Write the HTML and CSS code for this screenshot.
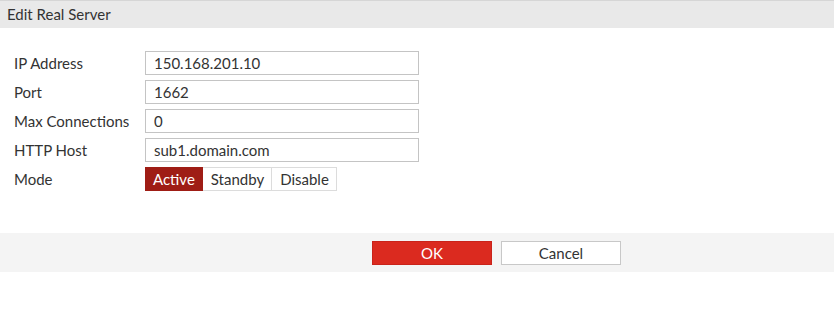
FILE: index.html
```html
<!DOCTYPE html>
<html>
<head>
<meta charset="utf-8">
<link rel="stylesheet" href="styles.css">
</head>
<body>
<div class="dialog">
  <div class="title">Edit Real Server</div>
  <form class="form">
    <label class="lbl">IP Address</label>
    <div class="field">150.168.201.10</div>
    <label class="lbl">Port</label>
    <div class="field">1662</div>
    <label class="lbl">Max Connections</label>
    <div class="field">0</div>
    <label class="lbl">HTTP Host</label>
    <div class="field">sub1.domain.com</div>
    <label class="lbl">Mode</label>
    <div class="modes">
      <span class="mode active">Active</span><span class="mode">Standby</span><span class="mode">Disable</span>
    </div>
  </form>
  <div class="footer">
    <button class="btn ok">OK</button>
    <button class="btn cancel">Cancel</button>
  </div>
</div>
</body>
</html>
```
FILE: styles.css
```css
* { box-sizing: border-box; }
html, body { margin: 0; padding: 0; background: #fff; }
body {
  font-family: Lato, "Open Sans", "Liberation Sans", sans-serif;
  font-size: 15px;
  color: #333;
  width: 834px;
  height: 336px;
}
.title {
  height: 28px;
  line-height: 27px;
  background: #e9e9e9;
  border-top: 1px solid #d6d6d6;
  padding-left: 7px;
  font-size: 15px;
  color: #333;
}
.form {
  display: grid;
  grid-template-columns: 131px 274px;
  grid-auto-rows: 24px;
  row-gap: 5px;
  padding: 23px 0 0 14px;
  height: 205px;
  align-content: start;
  align-items: center;
}
.lbl { line-height: 24px; }
.field {
  height: 24px;
  border: 1px solid #c4c4c4;
  padding-left: 8px;
  line-height: 22px;
  color: #333;
}
.modes { display: flex; height: 24px; align-self: start; }
.mode {
  height: 24px;
  line-height: 22px;
  border: 1px solid #dcdcdc;
  border-left: none;
  padding: 0 7px 0 8px;
  background: #fff;
  color: #333;
}
.mode.active {
  background: #9f1d15;
  border-color: #9f1d15;
  color: #fff;
  padding: 0 7px;
  border-left: 1px solid #9f1d15;
}
.footer {
  height: 39px;
  background: #f4f4f4;
  display: flex;
  gap: 9px;
  padding: 8px 0 0 372px;
}
.btn {
  width: 120px;
  height: 24px;
  font-family: inherit;
  font-size: 15px;
  padding: 0;
  border-radius: 0;
  cursor: pointer;
}
.ok { background: #db2a1f; border: 1px solid #c9231a; color: #fff; }
.cancel { background: #fff; border: 1px solid #c8c8c8; color: #333; }
```
